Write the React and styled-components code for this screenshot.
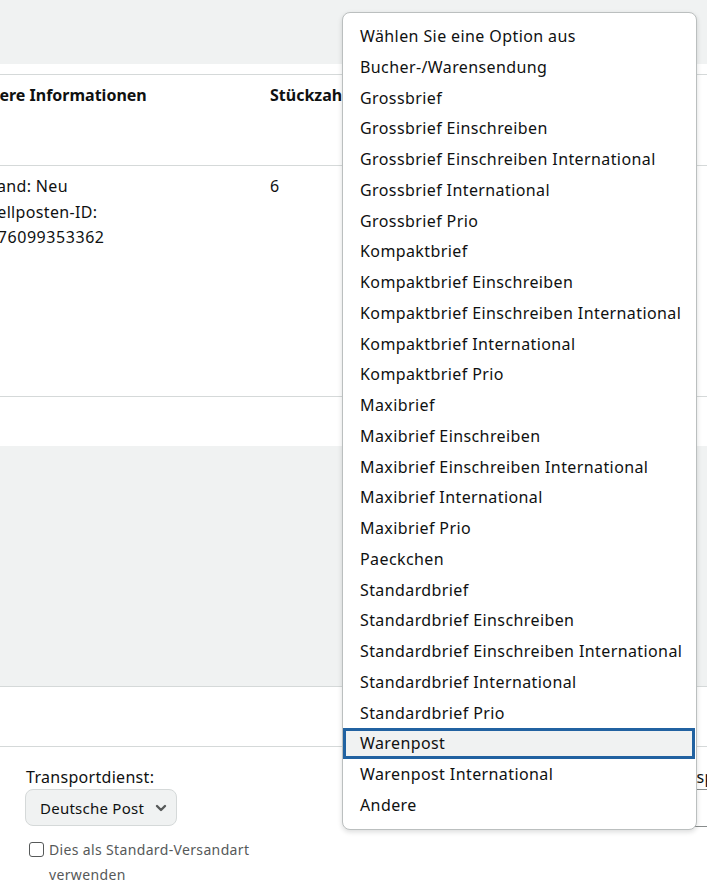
import React from "react";
import styled, { createGlobalStyle } from "styled-components";

const GlobalStyle = createGlobalStyle`
  html, body { margin: 0; padding: 0; }
  body {
    font-family: "Noto Sans", "Open Sans", Arial, sans-serif;
    color: #0f1111;
    background: #fff;
    overflow: hidden;
    width: 707px;
    height: 892px;
  }
`;

const Page = styled.div`
  position: relative;
  width: 707px;
  height: 892px;
  overflow: hidden;
`;

const TopBand = styled.div`
  height: 64px;
  background: #f0f2f2;
`;

const Table = styled.div`
  margin-top: 10px;
  border-top: 1px solid #d5d9d9;
  margin-left: -37px;
  width: 760px;
`;

const Row = styled.div`
  display: grid;
  grid-template-columns: 307px 1fr;
  height: ${(p) => p.$h}px;
  box-sizing: border-box;
  border-bottom: 1px solid #d5d9d9;
  padding-top: 8px;
`;

const Cell = styled.div`
  font-size: 16px;
  line-height: 25.5px;
  font-weight: ${(p) => (p.$bold ? 700 : 400)};
  letter-spacing: ${(p) => (p.$bold ? "0" : "0.35px")};
  white-space: nowrap;
`;

const IdLine = styled.span`
  display: inline-block;
  letter-spacing: 0.55px;
  margin-left: -4px;
`;

const Spacer = styled.div`
  height: ${(p) => p.$h}px;
  background: ${(p) => p.$bg || "#fff"};
  border-bottom: ${(p) => (p.$line ? "1px solid #d5d9d9" : "none")};
`;

const Form = styled.div`
  display: flex;
  padding: 18px 0 0 26px;
`;

const Field = styled.div`
  display: flex;
  flex-direction: column;
  width: ${(p) => p.$w}px;
  flex-shrink: 0;
`;

const Label = styled.div`
  font-size: 16px;
  line-height: 24px;
  letter-spacing: 0.3px;
  white-space: nowrap;
`;

const SelectBox = styled.div`
  display: flex;
  align-items: center;
  justify-content: space-between;
  box-sizing: border-box;
  width: 152px;
  height: 37px;
  padding: 0 9px 0 14px;
  border: 1px solid #d5d9d9;
  border-radius: 8px;
  background: #f0f2f2;
  font-size: 15px;
  letter-spacing: 0.25px;
  margin-left: -1px;
`;

const InputBox = styled.div`
  box-sizing: border-box;
  height: 38px;
  width: 200px;
  border: 1px solid #888c8c;
  border-radius: 3px;
`;

const CheckRow = styled.label`
  display: flex;
  align-items: flex-start;
  gap: 5px;
  margin-top: 11px;
  margin-left: 3px;
  font-size: 14px;
  line-height: 25px;
  letter-spacing: 0.35px;
  color: #565959;
`;

const Box = styled.span`
  flex-shrink: 0;
  width: 15px;
  height: 15px;
  margin-top: 5px;
  border: 1px solid #565959;
  border-radius: 3px;
  box-sizing: border-box;
`;

const Dropdown = styled.ul`
  position: absolute;
  left: 342px;
  top: 12px;
  width: 355px;
  box-sizing: border-box;
  margin: 0;
  padding: 8px 0;
  list-style: none;
  background: #fff;
  border: 1px solid #bbbfbf;
  border-radius: 8px;
  box-shadow: 0 2px 5px rgba(15, 17, 17, 0.15);
`;

const Option = styled.li`
  box-sizing: border-box;
  height: 30.76px;
  line-height: ${(p) => (p.$active ? "24.76px" : "30.76px")};
  padding-left: ${(p) => (p.$active ? "14px" : "17px")};
  font-size: 16px;
  letter-spacing: 0.4px;
  white-space: nowrap;
  background: ${(p) => (p.$active ? "#f0f2f2" : "transparent")};
  border: ${(p) => (p.$active ? "3px solid #2162a1" : "none")};
  margin-right: ${(p) => (p.$active ? "1px" : "0")};
`;

const Chevron = () => (
  <svg width="12" height="12" viewBox="0 0 12 12">
    <path d="M2 4 L6 8 L10 4" fill="none" stroke="#565959" strokeWidth="2.4" strokeLinecap="round" strokeLinejoin="round" />
  </svg>
);

const options = [
  "Wählen Sie eine Option aus",
  "Bucher-/Warensendung",
  "Grossbrief",
  "Grossbrief Einschreiben",
  "Grossbrief Einschreiben International",
  "Grossbrief International",
  "Grossbrief Prio",
  "Kompaktbrief",
  "Kompaktbrief Einschreiben",
  "Kompaktbrief Einschreiben International",
  "Kompaktbrief International",
  "Kompaktbrief Prio",
  "Maxibrief",
  "Maxibrief Einschreiben",
  "Maxibrief Einschreiben International",
  "Maxibrief International",
  "Maxibrief Prio",
  "Paeckchen",
  "Standardbrief",
  "Standardbrief Einschreiben",
  "Standardbrief Einschreiben International",
  "Standardbrief International",
  "Standardbrief Prio",
  "Warenpost",
  "Warenpost International",
  "Andere",
];

export default function App() {
  return (
    <>
      <GlobalStyle />
      <Page>
        <TopBand />
        <Table>
          <Row $h={91}>
            <Cell $bold>Weitere Informationen</Cell>
            <Cell $bold>Stückzahl</Cell>
          </Row>
          <Row $h={231}>
            <Cell>
              Zustand: Neu
              <br />
              Bestellposten-ID:
              <br />
              <IdLine>058776099353362</IdLine>
            </Cell>
            <Cell>6</Cell>
          </Row>
        </Table>
        <Spacer $h={49} />
        <Spacer $h={240} $bg="#f0f2f2" $line />
        <Spacer $h={59} $line />
        <Form>
          <Field $w={636}>
            <Label>Transportdienst:</Label>
            <SelectBox>
              <span>Deutsche Post</span>
              <Chevron />
            </SelectBox>
            <CheckRow>
              <Box />
              <span>
                Dies als Standard-Versandart
                <br />
                verwenden
              </span>
            </CheckRow>
          </Field>
          <Field $w={220}>
            <Label>Transportdienst-Nr.:</Label>
            <InputBox />
          </Field>
        </Form>
        <Dropdown>
          {options.map((o) => (
            <Option key={o} $active={o === "Warenpost"}>
              {o}
            </Option>
          ))}
        </Dropdown>
      </Page>
    </>
  );
}
